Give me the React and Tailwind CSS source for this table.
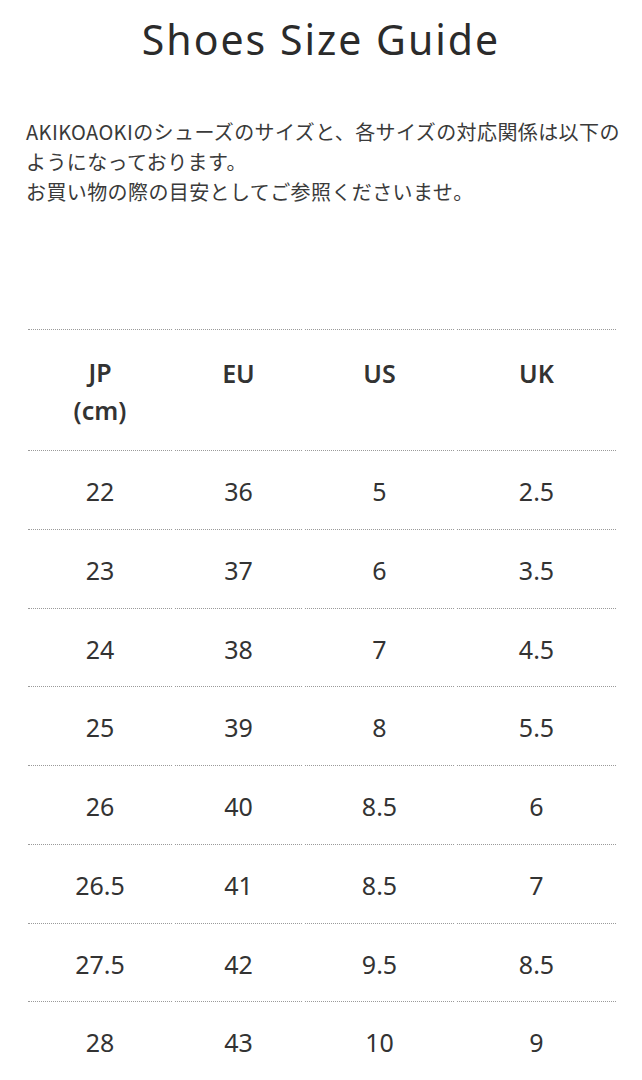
const rows = [
  ["22", "36", "5", "2.5"],
  ["23", "37", "6", "3.5"],
  ["24", "38", "7", "4.5"],
  ["25", "39", "8", "5.5"],
  ["26", "40", "8.5", "6"],
  ["26.5", "41", "8.5", "7"],
  ["27.5", "42", "9.5", "8.5"],
  ["28", "43", "10", "9"],
];

function Cell({ children, head }) {
  return (
    <div
      className={
        "border-t border-dotted border-[#9a9a9a] flex justify-center text-center " +
        (head
          ? "h-[121px] items-center font-semibold leading-[38px]"
          : "h-[78.75px] items-center pt-[4px]")
      }
    >
      {children}
    </div>
  );
}

export default function App() {
  return (
    <div className="min-h-[1080px] bg-white text-[#333] overflow-hidden [font-family:'Noto_Sans','Noto_Sans_CJK_JP',sans-serif]">
      {/* title */}
      <h1 className="pt-[15px] text-center text-[41px] leading-[48px] tracking-[2px] text-[#2b2b2b] [font-family:'Noto_Sans',sans-serif]">
        Shoes Size Guide
      </h1>

      {/* intro */}
      <div className="mt-[54px] px-[26px] text-[20px] leading-[30px] tracking-[0.4px] text-[#3a3a3a] whitespace-nowrap [font-family:'Noto_Sans_CJK_JP',sans-serif]">
        <p>
          AKIKOAOKIのシューズのサイズと、各サイズの対応関係は以下の
          <br />
          ようになっております。
        </p>
        <p>お買い物の際の目安としてご参照くださいませ。</p>
      </div>

      {/* size table */}
      <div className="mt-[122px] ml-[28px] w-[588px] grid grid-cols-[144px_127px_149px_159px] gap-x-[3px] text-[25px] text-[#333]">
        <Cell head>
          <span className="mt-[2px]">
            JP
            <br />
            (cm)
          </span>
        </Cell>
        <Cell head>
          <span className="self-start mt-[24px]">EU</span>
        </Cell>
        <Cell head>
          <span className="self-start mt-[24px]">US</span>
        </Cell>
        <Cell head>
          <span className="self-start mt-[24px]">UK</span>
        </Cell>
        {rows.map((r, i) =>
          r.map((v, j) => <Cell key={i + "-" + j}>{v}</Cell>)
        )}
      </div>
    </div>
  );
}
